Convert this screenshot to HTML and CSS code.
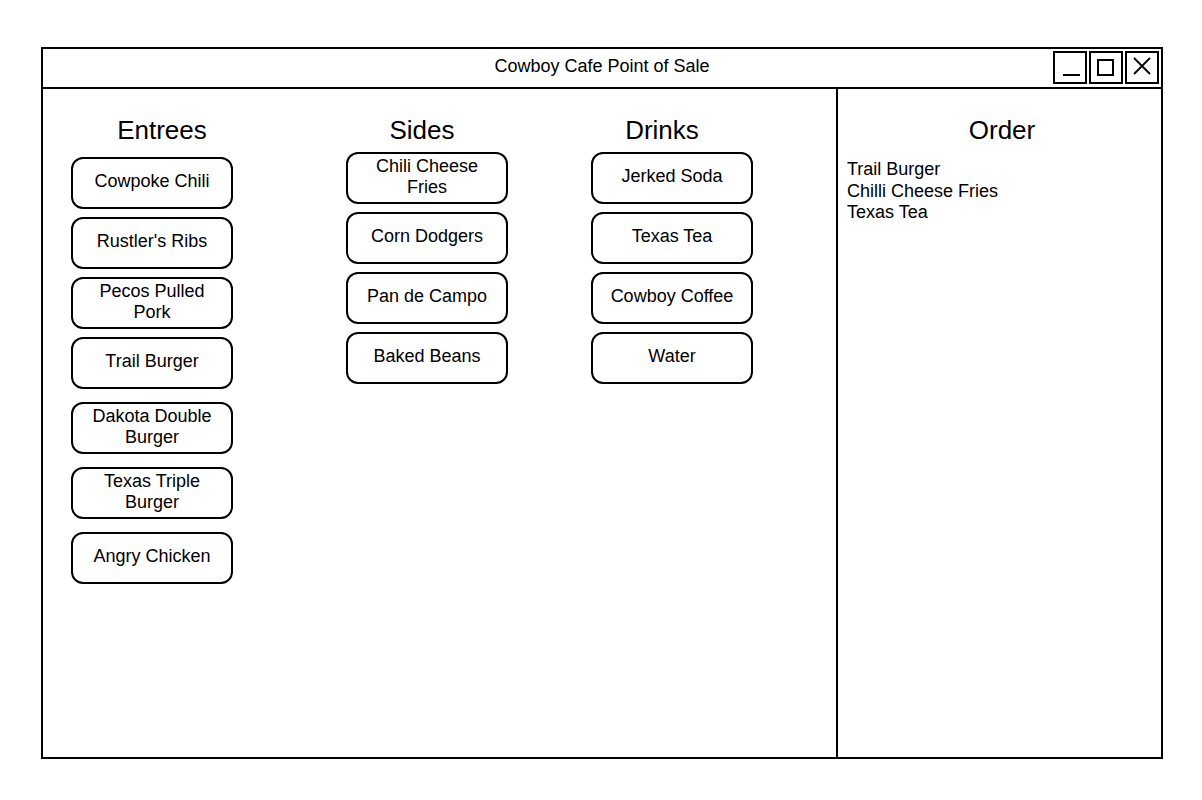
FILE: index.html
```html
<!DOCTYPE html>
<html lang="en">
<head>
  <meta charset="UTF-8">
  <title>Cowboy Cafe Point of Sale</title>
  <link rel="stylesheet" href="styles.css">
</head>
<body>
  <div class="window">
    <div class="titlebar">
      <div></div>
      <div class="title">Cowboy Cafe Point of Sale</div>
      <div class="controls">
        <div class="control">
          <svg width="30" height="29" viewBox="0 0 30 29"><line x1="8" y1="22" x2="25" y2="22" stroke="#000" stroke-width="2"/></svg>
        </div>
        <div class="control">
          <svg width="30" height="29" viewBox="0 0 30 29"><rect x="7" y="7" width="15" height="15" fill="none" stroke="#000" stroke-width="2"/></svg>
        </div>
        <div class="control">
          <svg width="30" height="29" viewBox="0 0 30 29"><path d="M7 5 L23 21 M23 5 L7 21" stroke="#000" stroke-width="1.8" fill="none"/></svg>
        </div>
      </div>
    </div>

    <div class="content">
      <div class="menu">
        <div class="column entrees">
          <h2>Entrees</h2>
          <div class="item">Cowpoke Chili</div>
          <div class="item">Rustler's Ribs</div>
          <div class="item">Pecos Pulled Pork</div>
          <div class="item">Trail Burger</div>
          <div class="item spaced">Dakota Double Burger</div>
          <div class="item spaced">Texas Triple Burger</div>
          <div class="item spaced">Angry Chicken</div>
        </div>
        <div class="column sides">
          <h2>Sides</h2>
          <div class="item">Chili Cheese Fries</div>
          <div class="item">Corn Dodgers</div>
          <div class="item">Pan de Campo</div>
          <div class="item">Baked Beans</div>
        </div>
        <div class="column drinks">
          <h2>Drinks</h2>
          <div class="item">Jerked Soda</div>
          <div class="item">Texas Tea</div>
          <div class="item">Cowboy Coffee</div>
          <div class="item">Water</div>
        </div>
      </div>

      <div class="order">
        <h2>Order</h2>
        <ul class="order-list">
          <li>Trail Burger</li>
          <li>Chilli Cheese Fries</li>
          <li>Texas Tea</li>
        </ul>
      </div>
    </div>
  </div>
</body>
</html>
```

FILE: styles.css
```css
html {
  box-sizing: border-box;
}

*, *:before, *:after {
  box-sizing: inherit;
}

body {
  margin: 0;
  background: #fff;
  color: #000;
  font-family: "Liberation Sans", Arial, sans-serif;
}

.window {
  width: 1122px;
  height: 712px;
  margin: 47px 0 0 41px;
  border: 2px solid #000;
  display: flex;
  flex-direction: column;
}

.titlebar {
  height: 40px;
  border-bottom: 2px solid #000;
  display: grid;
  grid-template-columns: 1fr auto 1fr;
}

.title {
  font-size: 18px;
  line-height: 20px;
  padding-top: 7px;
}

.controls {
  justify-self: end;
  display: flex;
  gap: 2px;
  padding: 2px 2px 0 0;
}

.control {
  width: 34px;
  height: 33px;
  border: 2px solid #000;
}

.control svg {
  display: block;
}

.content {
  flex: 1;
  display: flex;
}

.menu {
  width: 795px;
  border-right: 2px solid #000;
  display: flex;
  align-items: flex-start;
}

h2 {
  margin: 26px 0 0;
  font-size: 26px;
  font-weight: normal;
  line-height: 30px;
  text-align: center;
}

.column {
  width: 162px;
  display: flex;
  flex-direction: column;
  gap: 8px;
}

.entrees { margin-left: 28px; }
.entrees h2 { padding-left: 20px; margin-bottom: 4px; }

.sides { margin-left: 113px; }
.sides h2 { padding-right: 10px; margin-bottom: -1px; }

.drinks { margin-left: 83px; }
.drinks h2 { padding-right: 20px; margin-bottom: -1px; }

.item {
  height: 52px;
  border: 2px solid #000;
  border-radius: 12px;
  padding: 0 14px 3px;
  display: flex;
  align-items: center;
  justify-content: center;
  text-align: center;
  font-size: 18px;
  line-height: 21px;
}

.item.spaced {
  margin-top: 5px;
}

.order {
  flex: 1;
  padding: 0 8px;
}

.order h2 {
  padding-left: 5px;
  margin-bottom: 14px;
}

.order-list {
  list-style: none;
  margin: 0;
  padding: 0 0 0 1px;
  font-size: 18px;
  line-height: 21.5px;
}
```
